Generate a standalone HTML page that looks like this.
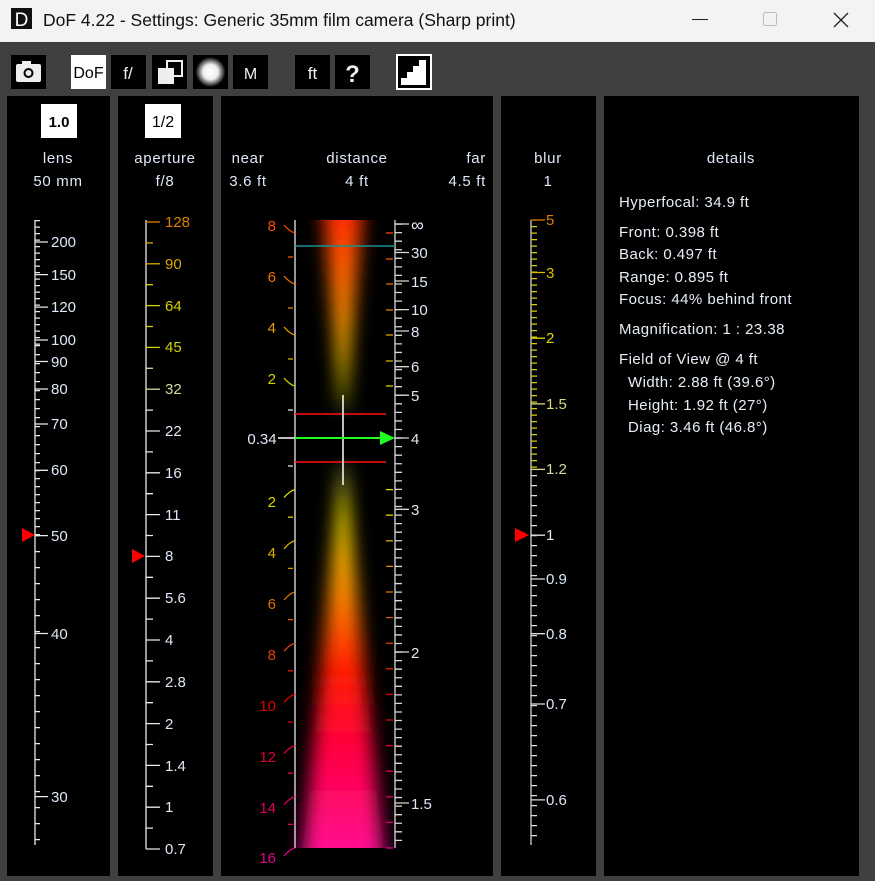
<!DOCTYPE html>
<html><head><meta charset="utf-8"><style>
html,body{margin:0;padding:0;width:875px;height:881px;overflow:hidden;background:#404040}
svg{position:absolute;left:0;top:0}
text{font-family:"Liberation Sans",sans-serif;font-size:15px;fill:#dfe8f8}
.m{text-anchor:middle}.e{text-anchor:end}
.h text{font-size:15px;letter-spacing:0.7px}
.d text{fill:#e8eef8;font-size:15px;letter-spacing:0.45px}
</style></head><body>
<svg width="875" height="881" xmlns="http://www.w3.org/2000/svg">
<defs>
<linearGradient id="gt" x1="0" y1="220" x2="0" y2="425" gradientUnits="userSpaceOnUse">
<stop offset="0" stop-color="#ff3000"/><stop offset="0.4" stop-color="#ff8000"/><stop offset="0.85" stop-color="#ffee00"/><stop offset="1" stop-color="#ffff80"/></linearGradient>
<linearGradient id="gb" x1="0" y1="450" x2="0" y2="848" gradientUnits="userSpaceOnUse">
<stop offset="0" stop-color="#ffff80"/><stop offset="0.15" stop-color="#ffee00"/><stop offset="0.35" stop-color="#ff9000"/><stop offset="0.55" stop-color="#ff2000"/><stop offset="0.75" stop-color="#ff0040"/><stop offset="1" stop-color="#ff1090"/></linearGradient>
<filter id="bl" x="-50%" y="0" width="200%" height="100%"><feGaussianBlur stdDeviation="9 0"/></filter>
<radialGradient id="rg"><stop offset="0" stop-color="#fff"/><stop offset="0.5" stop-color="#eee"/><stop offset="1" stop-color="#000"/></radialGradient>
</defs>
<!-- title bar -->
<rect x="0" y="0" width="875" height="42" fill="#f3f3f3"/>
<rect x="11" y="8" width="21" height="21" fill="#111"/>
<text x="21.5" y="26" class="m" style="fill:#fff;font-size:19px">D</text>
<text x="43" y="26" style="fill:#111;font-size:17.5px">DoF 4.22 - Settings: Generic 35mm film camera (Sharp print)</text>
<line x1="692" y1="19.5" x2="708" y2="19.5" stroke="#222" stroke-width="1"/>
<rect x="763.5" y="12.5" width="13" height="13" rx="2" fill="none" stroke="#bbb"/>
<path d="M834 13 L848 27 M848 13 L834 27" stroke="#222" stroke-width="1.3"/>
<!-- toolbar -->
<rect x="11" y="55" width="35" height="34" fill="#000"/>
<rect x="71" y="55" width="35" height="34" fill="#fff"/>
<rect x="111" y="55" width="35" height="34" fill="#000"/>
<rect x="152" y="55" width="35" height="34" fill="#000"/>
<rect x="193" y="55" width="35" height="34" fill="#000"/>
<rect x="233" y="55" width="35" height="34" fill="#000"/>
<rect x="295" y="55" width="35" height="34" fill="#000"/>
<rect x="335" y="55" width="35" height="34" fill="#000"/>
<rect x="16" y="64" width="25" height="18" rx="2" fill="#eee"/><rect x="22" y="61" width="9" height="4" fill="#eee"/>
<circle cx="28.5" cy="73" r="5" fill="#000"/><circle cx="28.5" cy="73" r="3" fill="#eee"/>
<text x="88.5" y="78" class="m" style="fill:#000;font-size:16px">DoF</text>
<text x="128" y="79" class="m" style="fill:#eee;font-size:17px">f/</text>
<rect x="167" y="61" width="15" height="15" fill="none" stroke="#eee" stroke-width="2"/>
<rect x="158" y="68" width="16" height="16" fill="#eee"/>
<circle cx="210.5" cy="72" r="15" fill="url(#rg)"/>
<text x="250.5" y="79" class="m" style="fill:#eee;font-size:16px">M</text>
<text x="312.5" y="79" class="m" style="fill:#eee;font-size:17px">ft</text>
<text x="352.5" y="82" class="m" style="fill:#eee;font-size:24px;font-weight:bold">?</text>
<rect x="397" y="55" width="34" height="34" fill="#000" stroke="#fff" stroke-width="2"/>
<path d="M401 85 L401 78 L407 78 L407 72 L413 72 L413 66 L419 66 L419 60 L426 60 L426 85 Z" fill="#fff"/>
<!-- panels -->
<rect x="7" y="96" width="103" height="780" fill="#000"/>
<rect x="118" y="96" width="95" height="780" fill="#000"/>
<rect x="221" y="96" width="272" height="780" fill="#000"/>
<rect x="501" y="96" width="95" height="780" fill="#000"/>
<rect x="604" y="96" width="255" height="780" fill="#000"/>
<!-- headers -->
<rect x="41" y="104" width="36" height="34" fill="#fff"/>
<text x="59" y="127" class="m" style="fill:#000;font-size:15px;font-weight:bold">1.0</text>
<rect x="145" y="104" width="36" height="34" fill="#fff"/>
<text x="163" y="127" class="m" style="fill:#000;font-size:16px">1/2</text>
<g class="h">
<text x="58" y="163" class="m">lens</text><text x="58" y="186" class="m">50 mm</text>
<text x="165" y="163" class="m">aperture</text><text x="165" y="186" class="m">f/8</text>
<text x="248" y="163" class="m">near</text><text x="248" y="186" class="m">3.6 ft</text>
<text x="357" y="163" class="m">distance</text><text x="357" y="186" class="m">4 ft</text>
<text x="486" y="163" class="e">far</text><text x="486" y="186" class="e">4.5 ft</text>
<text x="548" y="163" class="m">blur</text><text x="548" y="186" class="m">1</text>
<text x="731" y="163" class="m">details</text>
</g>

<!-- lens scale -->
<g stroke="#e8e8e8">
<line x1="35" y1="220" x2="35" y2="845" stroke-width="1.3"/>
<line x1="37.5" y1="220" x2="37.5" y2="345" stroke-width="5" stroke-dasharray="1.3 5.2"/>
<line x1="37.5" y1="345" x2="37.5" y2="470" stroke-width="5" stroke-dasharray="1.3 7.7"/>
<line x1="37.5" y1="470" x2="37.5" y2="535" stroke-width="5" stroke-dasharray="1.3 6.7"/>
<line x1="37.5" y1="535" x2="37.5" y2="846" stroke-width="5" stroke-dasharray="1.3 14.7"/>
<path d="M35 242H48M35 274.6H48M35 307.1H48M35 340H48M35 361.5H48M35 389H48M35 424H48M35 470.3H48M35 535.6H48M35 633.5H48M35 796.6H48" stroke-width="1.3"/>
</g>
<text x="51" y="247">200</text><text x="51" y="280">150</text><text x="51" y="312">120</text>
<text x="51" y="345">100</text><text x="51" y="367">90</text><text x="51" y="394">80</text>
<text x="51" y="429">70</text><text x="51" y="475">60</text><text x="51" y="541">50</text>
<text x="51" y="639">40</text><text x="51" y="802">30</text>

<!-- aperture scale -->
<line x1="146" y1="220" x2="146" y2="849" stroke="#e8e8e8" stroke-width="1.3"/>
<g stroke-width="1.3">
<path d="M146 222H160" stroke="#e08000"/><path d="M146 242.9H153" stroke="#d8a800"/>
<path d="M146 263.8H160" stroke="#d8a800"/><path d="M146 284.7H153" stroke="#d8d000"/>
<path d="M146 305.6H160" stroke="#d8d000"/><path d="M146 326.5H153" stroke="#d0d000"/>
<path d="M146 347.4H160" stroke="#d0d000"/><path d="M146 368.3H153" stroke="#d8d8a0"/>
<path d="M146 389.2H160" stroke="#d8d8a0"/>
<path d="M146 431H160M146 472.8H160M146 514.6H160M146 556.4H160M146 598.2H160M146 640H160M146 681.8H160M146 723.6H160M146 765.4H160M146 807.2H160M146 849H160" stroke="#e8e8e8"/>
<line x1="149.5" y1="409.45" x2="149.5" y2="849" stroke="#e8e8e8" stroke-width="7" stroke-dasharray="1.3 40.5"/>
</g>
<text x="165" y="227" style="fill:#e08000">128</text>
<text x="165" y="269" style="fill:#d8a800">90</text>
<text x="165" y="311" style="fill:#d8d000">64</text>
<text x="165" y="352" style="fill:#d0d000">45</text>
<text x="165" y="394" style="fill:#d8d8a0">32</text>
<text x="165" y="436">22</text><text x="165" y="478">16</text><text x="165" y="520">11</text>
<text x="165" y="561">8</text><text x="165" y="603">5.6</text><text x="165" y="645">4</text>
<text x="165" y="687">2.8</text><text x="165" y="729">2</text><text x="165" y="771">1.4</text>
<text x="165" y="812">1</text><text x="165" y="854">0.7</text>

<!-- blur scale -->
<line x1="531" y1="220" x2="531" y2="845" stroke="#d0d0d0" stroke-width="1.3"/>
<line x1="534" y1="226" x2="534" y2="470" stroke="#d8d000" stroke-width="6" stroke-dasharray="1.3 5.2"/>
<line x1="534" y1="475" x2="534" y2="845" stroke="#e0e0e0" stroke-width="6" stroke-dasharray="1.3 8.7"/>
<g stroke-width="1.3">
<path d="M531 220H545" stroke="#e08000"/><path d="M531 272.5H545" stroke="#d8c000"/>
<path d="M531 338.2H545" stroke="#d8d800"/><path d="M531 403.9H545" stroke="#d8d880"/>
<path d="M531 469.4H545" stroke="#d8d8a0"/>
<path d="M531 535.2H545M531 579H545M531 633.7H545M531 704H545M531 799.9H545" stroke="#e0e0e0"/>
</g>
<text x="546" y="225" style="fill:#e08000">5</text>
<text x="546" y="278" style="fill:#d8c000">3</text>
<text x="546" y="343" style="fill:#d8d800">2</text>
<text x="546" y="409" style="fill:#d8d880">1.5</text>
<text x="546" y="474" style="fill:#d8d8a0">1.2</text>
<text x="546" y="540">1</text><text x="546" y="584">0.9</text><text x="546" y="639">0.8</text>
<text x="546" y="709">0.7</text><text x="546" y="805">0.6</text>

<!-- beam -->
<g filter="url(#bl)">
<polygon points="324,220 362,220 343,420" fill="url(#gt)"/>
<polygon points="343,455 303,848 383,848" fill="url(#gb)"/>
</g>

<!-- distance axes -->
<line x1="295" y1="220" x2="295" y2="848" stroke="#e8e8e8" stroke-width="1.3"/>
<line x1="395" y1="220" x2="395" y2="848" stroke="#d8d8d8" stroke-width="1.3"/>
<line x1="398.5" y1="223.4" x2="398.5" y2="848" stroke="#d8d8d8" stroke-width="7" stroke-dasharray="1.3 7.26"/>
<path d="M395 224H409M395 252.5H409M395 281H409M395 309.6H409M395 331H409M395 366.7H409M395 395.2H409M395 438H409M395 509.3H409M395 652H409M395 803H409" stroke="#d8d8d8" stroke-width="1.3"/>
<text x="411" y="231" style="font-size:18px">∞</text>
<text x="411" y="258">30</text><text x="411" y="287">15</text><text x="411" y="315">10</text>
<text x="411" y="337">8</text><text x="411" y="372">6</text><text x="411" y="401">5</text>
<text x="411" y="444">4</text><text x="411" y="515">3</text><text x="411" y="658">2</text>
<text x="411" y="809">1.5</text>

<!-- left slanted ticks -->
<g fill="none" stroke-width="1.3">
<path d="M284 225 Q290 232 295 233" stroke="#ff4800"/><path d="M386 233H393" stroke="#ff4800"/>
<path d="M288 257H293M386 259H393" stroke="#ff5a00"/>
<path d="M284 276 Q290 283 295 284" stroke="#f07000"/><path d="M386 284H393" stroke="#f07000"/>
<path d="M288 308H293M386 310H393" stroke="#e88800"/>
<path d="M284 327 Q290 334 295 335" stroke="#e0a000"/><path d="M386 335H393" stroke="#e0a000"/>
<path d="M288 359H293M386 361H393" stroke="#d8b800"/>
<path d="M284 378 Q290 385 295 386" stroke="#d0d000"/><path d="M386 386H393" stroke="#d0d000"/>
<path d="M288 410H293" stroke="#e0e0e0"/>
<path d="M288 466H293" stroke="#e0e0e0"/>
<path d="M284 497.6 Q290 490.6 295 489.6" stroke="#d8d800"/><path d="M386 489.6H393" stroke="#d8d800"/>
<path d="M288 517.2H293M386 515.2H393" stroke="#e0c000"/>
<path d="M284 548.8 Q290 541.8 295 540.8" stroke="#e0b000"/><path d="M386 540.8H393" stroke="#e0b000"/>
<path d="M288 568.4H293M386 566.4H393" stroke="#e09000"/>
<path d="M284 600 Q290 593 295 592" stroke="#e07000"/><path d="M386 592H393" stroke="#e07000"/>
<path d="M288 619.6H293M386 617.6H393" stroke="#e05800"/>
<path d="M284 651.2 Q290 644.2 295 643.2" stroke="#e04000"/><path d="M386 643.2H393" stroke="#e04000"/>
<path d="M288 670.8H293M386 668.8H393" stroke="#e02000"/>
<path d="M284 702.4 Q290 695.4 295 694.4" stroke="#e00000"/><path d="M386 694.4H393" stroke="#e00000"/>
<path d="M288 722H293M386 720H393" stroke="#e00010"/>
<path d="M284 753.6 Q290 746.6 295 745.6" stroke="#e00030"/><path d="M386 745.6H393" stroke="#e00030"/>
<path d="M288 773.2H293M386 771.2H393" stroke="#e00040"/>
<path d="M284 804.8 Q290 797.8 295 796.8" stroke="#e00060"/><path d="M386 796.8H393" stroke="#e00060"/>
<path d="M288 824.4H293M386 822.4H393" stroke="#e00070"/>
<path d="M284 856 Q290 849 295 848" stroke="#e00090"/><path d="M386 848H393" stroke="#e00090"/>
</g>
<text x="276" y="231" class="e" style="fill:#ff4800">8</text>
<text x="276" y="282" class="e" style="fill:#f07000">6</text>
<text x="276" y="333" class="e" style="fill:#e0a000">4</text>
<text x="276" y="384" class="e" style="fill:#d0d000">2</text>
<text x="276" y="507" class="e" style="fill:#d8d800">2</text>
<text x="276" y="558" class="e" style="fill:#e0b000">4</text>
<text x="276" y="609" class="e" style="fill:#e07000">6</text>
<text x="276" y="660" class="e" style="fill:#e04000">8</text>
<text x="276" y="711" class="e" style="fill:#e00000">10</text>
<text x="276" y="762" class="e" style="fill:#e00030">12</text>
<text x="276" y="813" class="e" style="fill:#e00060">14</text>
<text x="276" y="863" class="e" style="fill:#e00090">16</text>

<!-- lines -->
<line x1="295" y1="246" x2="395" y2="246" stroke="#1a9090" stroke-width="1.5"/>
<line x1="295" y1="414" x2="386" y2="414" stroke="#ff1010" stroke-width="1.5"/>
<line x1="295" y1="462" x2="386" y2="462" stroke="#ff1010" stroke-width="1.5"/>
<line x1="343" y1="395" x2="343" y2="485" stroke="#fff" stroke-width="1.5"/>
<line x1="278" y1="438" x2="295" y2="438" stroke="#fff" stroke-width="1.5"/>
<line x1="295" y1="438" x2="382" y2="438" stroke="#20ff20" stroke-width="2"/>
<polygon points="380,431 395,438 380,445" fill="#20ff20"/>
<text x="262" y="444" class="m">0.34</text>

<!-- markers -->
<polygon points="22,528 35,535 22,542" fill="#ff0000"/>
<polygon points="132,549 145,556 132,563" fill="#ff0000"/>
<polygon points="515,528 529,535 515,542" fill="#ff0000"/>

<!-- details -->
<g class="d">
<text x="619" y="207">Hyperfocal: 34.9 ft</text>
<text x="619" y="237">Front: 0.398 ft</text>
<text x="619" y="259">Back: 0.497 ft</text>
<text x="619" y="282">Range: 0.895 ft</text>
<text x="619" y="304">Focus: 44% behind front</text>
<text x="619" y="334">Magnification: 1 : 23.38</text>
<text x="619" y="364">Field of View @ 4 ft</text>
<text x="628" y="387">Width: 2.88 ft (39.6°)</text>
<text x="628" y="410">Height: 1.92 ft (27°)</text>
<text x="628" y="432">Diag: 3.46 ft (46.8°)</text>
</g>
</svg>
</body></html>
